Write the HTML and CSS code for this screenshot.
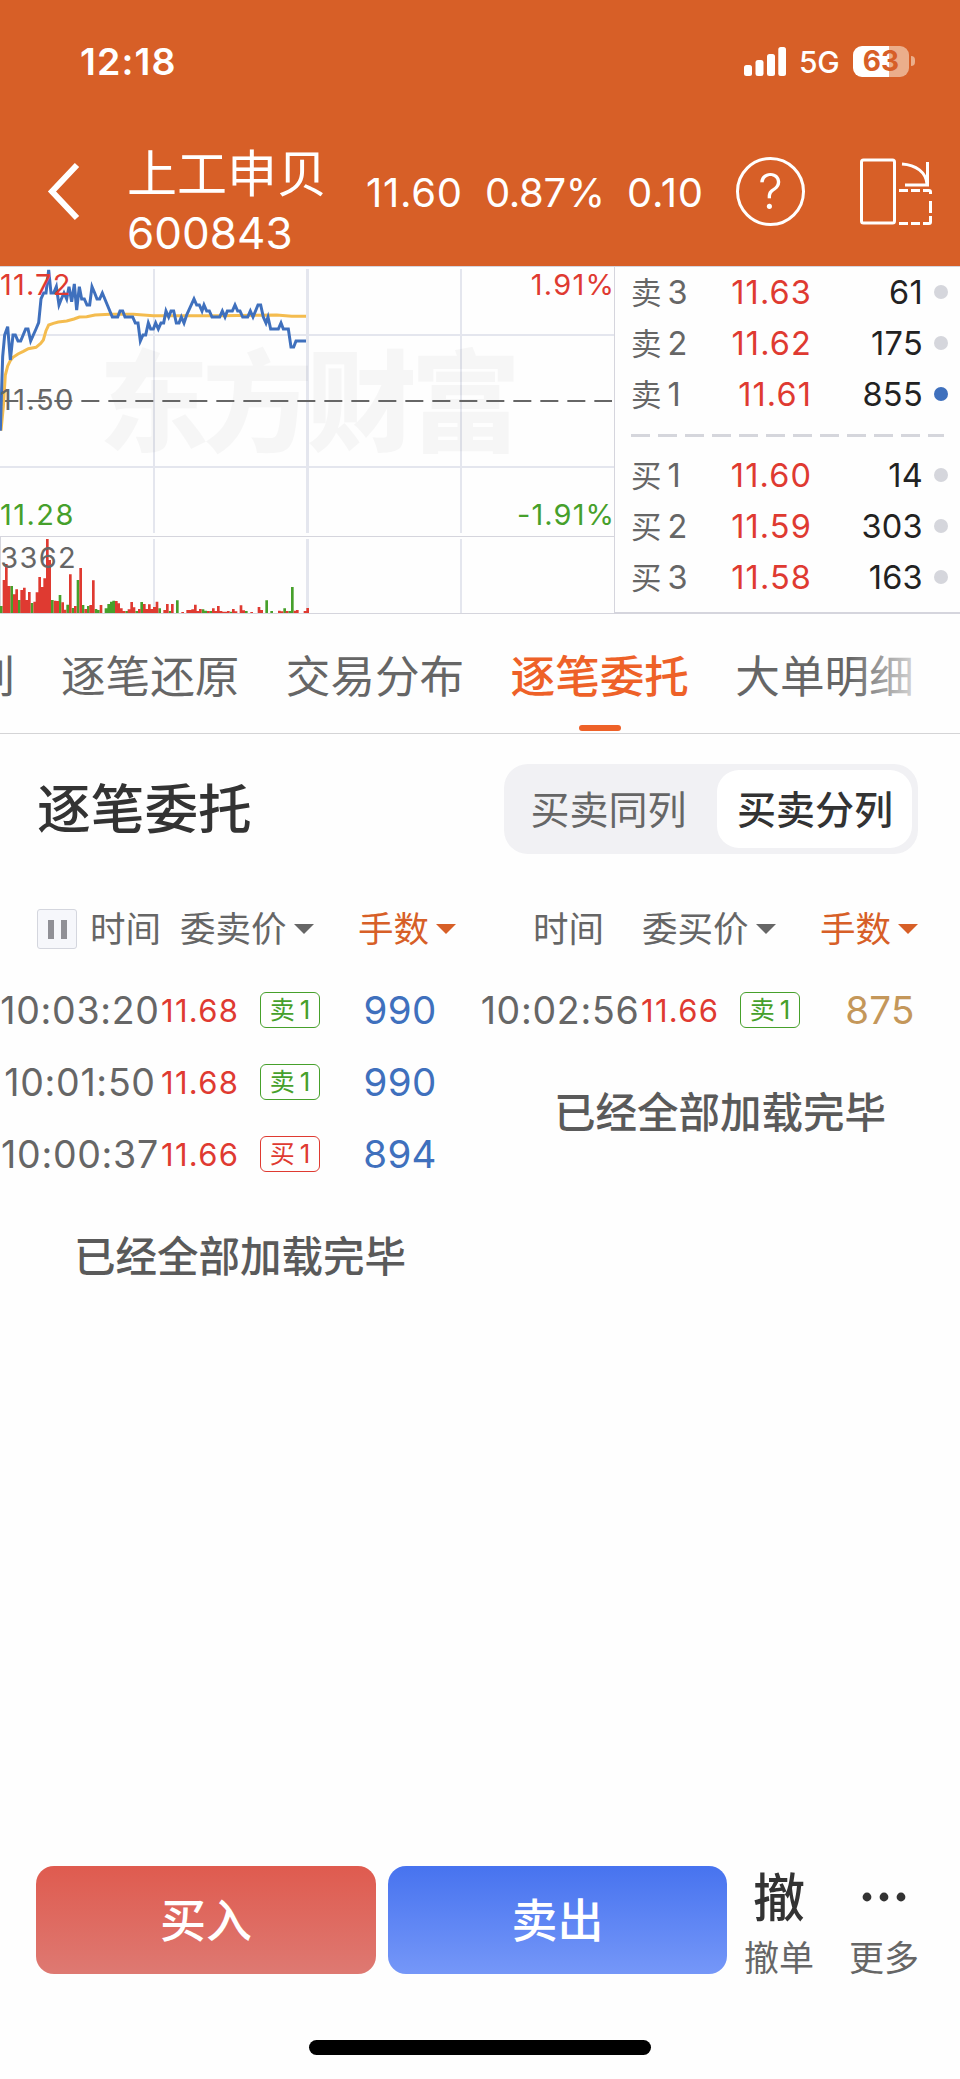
FILE: index.html
```
<!DOCTYPE html>
<html lang="zh-CN">

<head>
    <meta charset="UTF-8">
    <meta name="viewport" content="width=device-width, initial-scale=1.0">
    <title>上工申贝 600843</title>
    <link rel="stylesheet" href="styles.css">
</head>

<body>
    <header class="top">
        <div class="status-bar">
            <span class="clock">12:18</span>
            <svg class="signal" width="42" height="29" viewBox="0 0 42 29">
                <rect x="0" y="18" width="8" height="11" rx="2.5" />
                <rect x="11.5" y="13" width="8" height="16" rx="2.5" />
                <rect x="23" y="7" width="8" height="22" rx="2.5" />
                <rect x="34.300" y="0" width="7.700" height="29" rx="2.500" />
            </svg>
            <span class="network">5G</span>
            <div class="battery">63</div>
            <span class="battery-tip"></span>
        </div>
        <div class="nav-bar">
            <svg class="back" width="34" height="60" viewBox="0 0 34 60">
                <path d="M31 3L6 29.500L31 56" />
            </svg>
            <div class="stock">
                <div class="stock-name">上工申贝</div>
                <div class="stock-code">600843</div>
            </div>
            <div class="quote">
                <span class="q-price">11.60</span>
                <span class="q-rate">0.87%</span>
                <span class="q-diff">0.10</span>
            </div>
            <div class="help">?</div>
            <svg class="rotate" width="72" height="68" viewBox="0 0 72 68">
                <rect x="1.500" y="2" width="33" height="63" rx="2" />
                <path d="M42 6C56 7 66 14 67 26M67.500 4V27H45" />
                <path d="M39 32.500H48M51 32.500H60M63 32.500H69Q70.500 32.500 70.500 34V36M70.500 43V55M70.500 58V64Q70.500 65.500 69 65.500H63M60 65.500H51M48 65.500H39" />
            </svg>
        </div>
    </header>

    <section class="market">
        <svg class="chart" width="615" height="348" viewBox="0 18 1845 1044">
            <!-- grid -->
            <path class="grid" d="M0 225H1842M0 621H1842M462 27V819M1383 27V819M462 837V1059M1383 837V1059" />
            <path class="grid grid-mid" d="M922.500 27V819M922.500 837V1059" />
            <path class="frame" d="M0 19.500H1845M0 829.500H1843M1.500 829V1060M0 1060.500H1845M1843.500 18V1060" />
            <text class="watermark" x="296" y="548" textLength="1266">东方财富</text>
            <path class="prev-close" d="M1 423H1836" />

            <!-- volume -->
            <path class="vol down" d="M4 1059V1038M35 1059V978M58 1059V1020M96 1059V1029M157 1059V1020M180 1059V1005M203 1059V1034M219 1059V1044M234 1059V960M249 1059V1035M265 1059V1038M288 1059V1047M295 1059V1050M318 1059V1045M326 1059V1032M334 1059V1025M341 1059V1022M380 1059V1053M410 1059V1053M425 1059V1026M479 1059V1045M510 1059V1053M532 1059V1021M609 1059V1048M617 1059V1052M632 1059V1053M693 1059V1055M739 1059V1053M800 1059V1021M815 1059V1053M854 1059V1045M869 1059V1053M877 1059V981" />
            <path class="vol up" d="M12 1059V960M19 1059V912M27 1059V978M43 1059V1003M50 1059V988M65 1059V990M73 1059V983M81 1059V1020M88 1059V996M104 1059V1025M111 1059V997M119 1059V951M127 1059V981M134 1059V955M142 1059V837M149 1059V900M165 1059V1022M173 1059V1023M188 1059V1027M195 1059V1049M211 1059V943M226 1059V1038M242 1059V924M257 1059V1047M272 1059V1035M280 1059V961M303 1059V1035M349 1059V1023M356 1059V1030M364 1059V1045M372 1059V1053M387 1059V1048M395 1059V1026M402 1059V1042M418 1059V1047M433 1059V1032M441 1059V1047M448 1059V1033M456 1059V1047M463 1059V1041M471 1059V1025M494 1059V1050M502 1059V1032M517 1059V1032M548 1059V1056M563 1059V1050M571 1059V1050M578 1059V1048M586 1059V1034M594 1059V1053M601 1059V1047M625 1059V1053M640 1059V1045M647 1059V1053M655 1059V1038M663 1059V1053M670 1059V1055M678 1059V1055M685 1059V1053M700 1059V1047M708 1059V1054M723 1059V1036M731 1059V1051M755 1059V1056M777 1059V1041M785 1059V1050M838 1059V1052M846 1059V1054M861 1059V1053M885 1059V1052M892 1059V1050M915 1059V1053M923 1059V1044" />

            <!-- average and price -->
            <polyline class="line avg" points="3,512 10,440 16,345 23,318 31,302 39,292 54,282 70,274 85,266 108,262 122,250 130,240 138,212 146,195 160,190 175,186 200,183 222,177 238,171 260,170 285,165 330,163 400,163 460,167 660,167 830,165 875,169 918,169" />
            <polyline class="line price" points="1,512 8,290 14,225 23,200 31,300 39,225 46,225 54,243 62,243 77,207 84,207 92,243 100,225 108,207 116,188 123,117 131,99 138,99 146,30 153,99 161,99 169,80 177,135 184,117 192,99 200,117 207,80 215,125 223,72 230,150 238,80 245,117 253,117 261,135 269,135 276,80 284,99 291,117 299,117 307,99 322,135 337,171 353,171 360,153 368,153 375,171 398,171 406,189 414,189 421,243 429,225 437,225 445,189 452,207 460,207 467,189 475,207 483,189 491,189 498,153 506,171 513,153 521,153 529,189 537,189 544,171 552,189 560,165 582,117 590,135 598,135 606,153 612,135 620,153 628,153 636,171 659,171 667,153 675,171 682,153 697,153 705,135 713,153 720,153 728,171 743,171 751,153 759,171 774,135 782,135 790,171 798,189 804,171 812,207 835,207 843,189 850,207 865,207 873,261 881,261 888,243 918,243" />

            <text class="axis red" x="0" y="105" textLength="211">11.72</text>
            <text class="axis" x="0" y="450" textLength="220">11.50</text>
            <text class="axis green" x="0" y="795" textLength="220">11.28</text>
            <text class="axis" x="1" y="923" textLength="226">3362</text>
            <text class="axis red" x="1592" y="105" textLength="250">1.91%</text>
            <text class="axis green" x="1551" y="795" textLength="291">-1.91%</text>
        </svg>

        <div class="book">
            <div class="book-row"><span class="level">卖<b>3</b></span><span class="b-price">11.63</span><span class="b-vol">61</span><i class="dot"></i></div>
            <div class="book-row"><span class="level">卖<b>2</b></span><span class="b-price">11.62</span><span class="b-vol">175</span><i class="dot"></i></div>
            <div class="book-row"><span class="level">卖<b>1</b></span><span class="b-price">11.61</span><span class="b-vol">855</span><i class="dot on"></i></div>
            <div class="book-split"></div>
            <div class="book-row"><span class="level">买<b>1</b></span><span class="b-price">11.60</span><span class="b-vol">14</span><i class="dot"></i></div>
            <div class="book-row"><span class="level">买<b>2</b></span><span class="b-price">11.59</span><span class="b-vol">303</span><i class="dot"></i></div>
            <div class="book-row"><span class="level">买<b>3</b></span><span class="b-price">11.58</span><span class="b-vol">163</span><i class="dot"></i></div>
        </div>
    </section>

    <nav class="tabs">
        <span class="tab">列</span>
        <span class="tab">逐笔还原</span>
        <span class="tab">交易分布</span>
        <span class="tab active">逐笔委托</span>
        <span class="tab">大单明细</span>
    </nav>

    <div class="section-head">
        <h1>逐笔委托</h1>
        <div class="segment">
            <span>买卖同列</span>
            <span class="selected">买卖分列</span>
        </div>
    </div>

    <main class="orders">
        <div class="column">
            <div class="col-head">
                <span class="pause"></span>
                <span class="h-time">时间</span>
                <span class="h-price sort">委卖价</span>
                <span class="h-qty sort">手数</span>
            </div>
            <div class="order"><span class="time">10:03:20</span><span class="price">11.68</span><span class="tag">卖<b>1</b></span><span class="qty">990</span></div>
            <div class="order"><span class="time">10:01:50</span><span class="price">11.68</span><span class="tag">卖<b>1</b></span><span class="qty">990</span></div>
            <div class="order"><span class="time">10:00:37</span><span class="price">11.66</span><span class="tag buy">买<b>1</b></span><span class="qty">894</span></div>
            <div class="loaded">已经全部加载完毕</div>
        </div>
        <div class="column">
            <div class="col-head right">
                <span class="h-time">时间</span>
                <span class="h-price sort">委买价</span>
                <span class="h-qty sort">手数</span>
            </div>
            <div class="order"><span class="time">10:02:56</span><span class="price">11.66</span><span class="tag">卖<b>1</b></span><span class="qty gold">875</span></div>
            <div class="loaded">已经全部加载完毕</div>
        </div>
    </main>

    <footer class="actions">
        <div class="btn btn-buy">买入</div>
        <div class="btn btn-sell">卖出</div>
        <div class="tool">
            <span class="tool-icon">撤</span>
            <span class="tool-label">撤单</span>
        </div>
        <div class="tool">
            <svg class="more" width="46" height="50" viewBox="0 0 46 50">
                <circle cx="6" cy="25" r="4.400" />
                <circle cx="23" cy="25" r="4.400" />
                <circle cx="40" cy="25" r="4.400" />
            </svg>
            <span class="tool-label">更多</span>
        </div>
    </footer>
    <div class="home-indicator"></div>
</body>

</html>
```
FILE: styles.css
```
:root {
    --brand: #d75f27;
    --active: #ee6128;
    --red: #df3a31;
    --green: #46a02b;
    --blue: #3f70bd;
    --gray: #666;
    --line: #d5d5dd;
}

* {
    box-sizing: border-box;
}

body {
    margin: 0;
    width: 960px;
    height: 2079px;
    display: flex;
    flex-direction: column;
    overflow: hidden;
    background: #fefefe;
    color: var(--gray);
    font-family: "Inter", "Noto Sans CJK SC", sans-serif;
    font-feature-settings: "calt" 0;
    white-space: nowrap;
}

b,
i {
    font-weight: inherit;
    font-style: normal;
}

/* Header */
.top {
    height: 266px;
    background: var(--brand);
    color: #fff;
}

.status-bar {
    height: 122px;
    padding-left: 80px;
    display: flex;
    align-items: center;
}

.clock {
    width: 664px;
    font-size: 37.5px;
    font-weight: 600;
    letter-spacing: 1.1px;
}

.signal {
    fill: #fff;
}

.network {
    width: 67px;
    padding-left: 13px;
    font-size: 30px;
    font-weight: 500;
    letter-spacing: -0.2px;
    padding-top: 2px;
}

.battery {
    width: 56px;
    height: 31px;
    border-radius: 9px;
    background: linear-gradient(90deg, #fff 64%, #ebae8b 64%);
    color: var(--brand);
    font-size: 28px;
    font-weight: 700;
    line-height: 31px;
    text-align: center;
}

.battery-tip {
    width: 4px;
    height: 10px;
    margin-left: 2px;
    border-radius: 0 4px 4px 0;
    background: #ebae8b;
}

.nav-bar {
    height: 139px;
    padding-left: 46px;
    display: flex;
    align-items: center;
}

.back {
    width: 34px;
    fill: none;
    stroke: #fff;
    stroke-width: 6;
}

.stock {
    width: 238px;
    padding: 22px 0 0 47px;
}

.stock-name {
    font-size: 50px;
    line-height: 60px;
}

.stock-code {
    font-size: 44px;
    line-height: 58px;
}

.quote {
    width: 418px;
    padding: 2px 0 0 48px;
    display: flex;
    font-size: 40px;
}

.q-price {
    width: 119px;
    letter-spacing: 0.7px;
}

.q-rate {
    width: 142px;
    letter-spacing: -0.4px;
}

.q-diff {
    letter-spacing: 0.7px;
}

.help {
    width: 69px;
    height: 69px;
    border: 3px solid #fff;
    border-radius: 50%;
    font-size: 49px;
    font-weight: 300;
    line-height: 63px;
    text-align: center;
}

.rotate {
    margin-left: 55px;
    fill: none;
    stroke: #fff;
    stroke-width: 3;
}

/* Chart and order book */
.market {
    height: 348px;
    display: flex;
}

.chart {
    flex: none;
    overflow: hidden;
}

.grid {
    fill: none;
    stroke: #e4e6ee;
    stroke-width: 6;
}

.grid-mid {
    stroke-width: 9;
}

.frame {
    fill: none;
    stroke: var(--line);
    stroke-width: 3;
}

.watermark {
    font-family: "Noto Sans CJK SC", sans-serif;
    font-size: 330px;
    font-weight: 900;
    fill: rgba(0, 0, 0, 0.03);
}

.prev-close {
    stroke: var(--gray);
    stroke-width: 6;
    stroke-dasharray: 54 27;
}

.vol {
    stroke-width: 8;
}

.up {
    stroke: var(--red);
}

.down {
    stroke: var(--green);
}

.line {
    fill: none;
    stroke-width: 9;
}

.avg {
    stroke: #f4bc4f;
}

.line.price {
    stroke: var(--blue);
}

.axis {
    font-size: 87px;
    fill: var(--gray);
}

.axis.red {
    fill: var(--red);
}

.axis.green {
    fill: var(--green);
}

.book {
    flex: 1;
    height: 348px;
    padding: 0 12px 0 16px;
    border-top: 1px solid var(--line);
    border-bottom: 2px solid var(--line);
}

.book-row {
    height: 51px;
    display: flex;
    align-items: center;
    font-size: 32.5px;
    line-height: 51px;
}

.level {
    width: 80px;
    font-size: 30.5px;
}

.level b {
    margin-left: 6px;
    font-size: 32.5px;
}

.b-price {
    width: 101px;
    text-align: right;
    color: var(--red);
    letter-spacing: 1.1px;
}

.b-vol {
    width: 111px;
    text-align: right;
    color: #222;
    letter-spacing: 0.3px;
}

.dot {
    width: 14px;
    height: 14px;
    margin: -2px 0 0 11px;
    border-radius: 50%;
    background: #d5d6dc;
}

.dot.on {
    background: var(--blue);
}

.book-split {
    height: 3px;
    margin: 14px 0 13px;
    width: 313px;
    background: repeating-linear-gradient(90deg, #d5d6dc 0 19px, transparent 19px 27px);
}

/* Tabs */
.tabs {
    position: relative;
    height: 120px;
    padding-top: 3px;
    display: flex;
    gap: 46.4px;
    overflow: hidden;
    border-bottom: 1px solid #d4d4d6;
}

.tabs::after {
    content: "";
    position: absolute;
    top: 0;
    right: 0;
    width: 110px;
    height: 118px;
    background: linear-gradient(90deg, rgba(254, 254, 254, 0), #fefefe 80%);
}

.tab {
    position: relative;
    flex: none;
    font-size: 44.6px;
    line-height: 120px;
}

.tab:first-child {
    margin-left: -30px;
}

.tab.active {
    color: var(--active);
    font-weight: 500;
}

.tab.active::after {
    content: "";
    position: absolute;
    left: 68px;
    top: 108px;
    width: 42px;
    height: 6px;
    border-radius: 3px;
    background: var(--active);
}

/* Section title and switch */
.section-head {
    height: 150px;
    padding: 0 42px 0 37px;
    display: flex;
    align-items: center;
    justify-content: space-between;
}

h1 {
    margin: 0;
    padding-top: 2px;
    color: #333;
    font-size: 53.7px;
    font-weight: 500;
    line-height: 80px;
}

.segment {
    width: 414px;
    height: 90px;
    padding: 6px;
    display: flex;
    border-radius: 24px;
    background: #f1f1f4;
    font-size: 39px;
    line-height: 80px;
    text-align: center;
}

.segment span {
    width: 207px;
    height: 78px;
    padding-right: 10px;
}

.segment .selected {
    width: 195px;
    padding: 0 0 0 1px;
    border-radius: 22px;
    background: #fff;
    color: #333;
    font-weight: 500;
}

/* Order lists */
.orders {
    flex: 1;
    display: flex;
}

.column {
    width: 480px;
}

.col-head {
    height: 90px;
    padding-left: 37px;
    display: flex;
    align-items: center;
    font-size: 35.5px;
    line-height: 54px;
}

.col-head span:not(.pause) {
    margin-top: 2px;
}

.col-head.right {
    padding-left: 53px;
}

.pause {
    width: 40px;
    height: 40px;
    margin-right: 13px;
    display: flex;
    align-items: center;
    justify-content: center;
    gap: 7px;
    border: 1px solid #d4d6de;
    border-radius: 3px;
    background: #f6f7fb;
}

.pause::before,
.pause::after {
    content: "";
    width: 6px;
    height: 19px;
    background: #909096;
}

.h-time {
    width: 90px;
}

.right .h-time {
    width: 109px;
}

.h-price {
    width: 178px;
}

.sort::after {
    content: "";
    display: inline-block;
    margin-left: 7px;
    border: 10px solid transparent;
    border-top-color: currentColor;
    border-bottom: 0;
    vertical-align: 8px;
}

.h-qty {
    color: var(--brand);
}

.order {
    height: 72px;
    display: flex;
    align-items: center;
}

.time {
    width: 160px;
    font-size: 37.5px;
    letter-spacing: 0.7px;
    text-align: center;
}

.order .price {
    width: 100px;
    padding-left: 1px;
    color: var(--red);
    font-size: 31px;
    letter-spacing: 1.3px;
}

.tag {
    width: 60px;
    height: 36px;
    border: 1.5px solid var(--green);
    border-radius: 6px;
    color: var(--green);
    font-size: 25px;
    line-height: 34px;
    text-align: center;
}

.tag b {
    margin-left: 5px;
    font-size: 26px;
}

.tag.buy {
    border-color: var(--red);
    color: var(--red);
}

.qty {
    width: 160px;
    color: var(--blue);
    font-size: 38.5px;
    letter-spacing: 0.3px;
    text-align: center;
}

.qty.gold {
    color: #c4975a;
}

.loaded {
    height: 133px;
    color: #5a5a5a;
    font-size: 41.5px;
    font-weight: 500;
    line-height: 135px;
    text-align: center;
}

/* Bottom bar */
.actions {
    height: 108px;
    padding-left: 36px;
    display: flex;
}

.btn {
    width: 340px;
    height: 108px;
    margin-right: 12px;
    border-radius: 18px;
    color: #fff;
    font-size: 46px;
    font-weight: 500;
    line-height: 108px;
    text-align: center;
}

.btn-buy {
    background: linear-gradient(#df5b4f, #de7972);
}

.btn-sell {
    width: 339px;
    background: linear-gradient(#4773ef, #7597f8);
}

.tool {
    width: 80px;
    margin-right: 25px;
    display: flex;
    flex-direction: column;
    align-items: center;
}

.tool-icon {
    flex: none;
    height: 67px;
    color: #333;
    font-size: 52px;
    font-weight: 500;
    line-height: 66px;
}

.tool-label {
    flex: none;
    font-size: 35px;
    line-height: 50px;
}

.more {
    flex: none;
    margin: 6px 0 11px;
    fill: #333;
}

.home-indicator {
    width: 342px;
    height: 15px;
    margin: 66px 0 24px 309px;
    border-radius: 8px;
    background: #000;
}
```
